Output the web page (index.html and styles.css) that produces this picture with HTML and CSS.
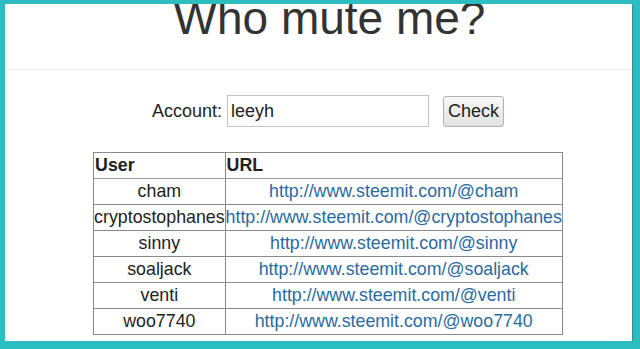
FILE: index.html
```html
<!DOCTYPE html>
<html>
<head>
    <title>Who mute me?</title>
    <meta name="viewport" content="width=device-width, initial-scale=1.0">
    <link rel="stylesheet" href="styles.css">
</head>
<body>
    <div class="page">
        <div class="header">
            <h1>Who mute me?</h1>
        </div>
        <div class="content">
            <form class="check-form">
                <label for="account">Account:</label>
                <input type="text" id="account" value="leeyh">
                <button type="button">Check</button>
            </form>
            <table class="result">
                <tr><th>User</th><th>URL</th></tr>
                <tr><td>cham</td><td><a href="#">http://www.steemit.com/@cham</a></td></tr>
                <tr><td>cryptostophanes</td><td><a href="#">http://www.steemit.com/@cryptostophanes</a></td></tr>
                <tr><td>sinny</td><td><a href="#">http://www.steemit.com/@sinny</a></td></tr>
                <tr><td>soaljack</td><td><a href="#">http://www.steemit.com/@soaljack</a></td></tr>
                <tr><td>venti</td><td><a href="#">http://www.steemit.com/@venti</a></td></tr>
                <tr><td>woo7740</td><td><a href="#">http://www.steemit.com/@woo7740</a></td></tr>
            </table>
        </div>
    </div>
</body>
</html>
```

FILE: styles.css
```css
html {
    background-color: #2bbdc0;
}
body {
    margin: 0;
    padding: 4px 8px 0 5px;
    font-family: 'Liberation Sans', Arial, sans-serif;
    color: #222;
}
.page {
    background: white;
    height: 337px;
    overflow: hidden;
    box-shadow: 1px 1px 0 #3f8a8c;
}
.header {
    display: flow-root;
    margin-left: 3px;
    height: 65px;
    border-bottom: 1px solid #eee;
}
h1 {
    margin: -9px 0 0 0;
    font-size: 46px;
    line-height: 46px;
    font-weight: normal;
    color: #333;
    text-align: center;
    padding-left: 19px;
}
.content {
    padding-left: 19px;
    display: flex;
    flex-direction: column;
    align-items: center;
}
.check-form {
    margin-top: 25px;
    display: flex;
    align-items: center;
    font-size: 18px;
}
.check-form label {
    margin-right: 5px;
}
.check-form input {
    width: 202px;
    height: 32px;
    box-sizing: border-box;
    border: 1px solid #c4c4c4;
    padding: 0 3px;
    font-family: inherit;
    font-size: 18px;
    color: #222;
}
.check-form button {
    margin-left: 14px;
    width: 61px;
    height: 31px;
    border: 1px solid #b0b0b0;
    border-radius: 3px;
    background: linear-gradient(#f8f8f8, #e2e2e2);
    font-family: inherit;
    font-size: 18px;
    color: #222;
    padding: 0;
}
.result {
    margin-top: 25px;
    border-collapse: collapse;
    border: 1px solid #555;
    font-size: 17.8px;
}
.result th,
.result td {
    border: 1px solid #8a8a8a;
    padding: 0;
    line-height: 25px;
    white-space: nowrap;
}
.result th {
    text-align: left;
    padding-left: 1px;
    border-bottom-color: #999;
}
.result td {
    text-align: center;
}
.result a {
    color: #2a6aa0;
    text-decoration: none;
}
```
